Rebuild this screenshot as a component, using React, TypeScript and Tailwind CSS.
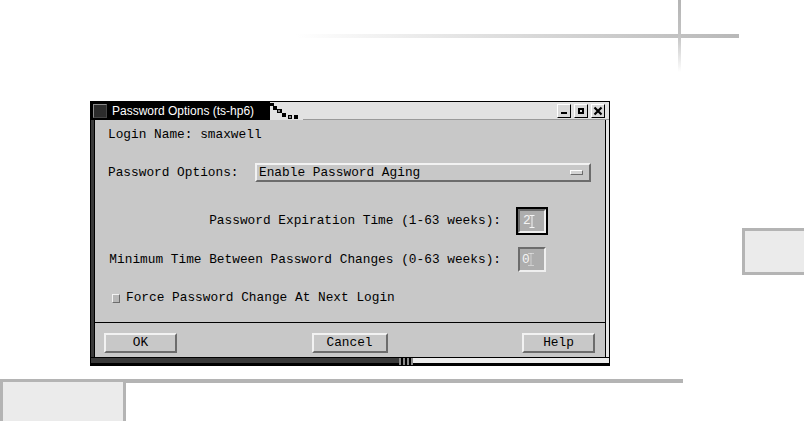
import { ReactNode } from "react";

const raised =
  "border-2 border-t-[#f2f2f2] border-l-[#f2f2f2] border-b-[#6c6c6c] border-r-[#6c6c6c]";
const sunken =
  "border-2 border-t-[#6c6c6c] border-l-[#6c6c6c] border-b-[#efefef] border-r-[#efefef]";

function Btn({ children }: { children: ReactNode }) {
  return (
    <div className={`${raised} bg-[#c8c8c8] h-[20px] flex items-center justify-center text-black leading-none`}>
      {children}
    </div>
  );
}

function WinBtn({ kind }: { kind: "min" | "max" | "close" }) {
  return (
    <div className="w-[14px] h-[14px] border border-t-white border-l-white border-b-black border-r-black bg-[#d9d9d9] flex items-center justify-center">
      <svg width="10" height="10" viewBox="0 0 10 10">
        {kind === "min" && <rect x="2" y="6" width="6" height="2" fill="#000" />}
        {kind === "max" && (
          <>
            <rect x="2" y="2" width="6" height="6" fill="#000" />
            <rect x="4" y="4" width="2" height="2" fill="#d9d9d9" />
          </>
        )}
        {kind === "close" && (
          <path d="M1.5 1.5 L8.5 8.5 M8.5 1.5 L1.5 8.5" stroke="#000" strokeWidth="2.2" />
        )}
      </svg>
    </div>
  );
}

function Cursor({ dotted }: { dotted?: boolean }) {
  return (
    <svg width="6" height="13" viewBox="0 0 6 13" className="-ml-[2px]">
      <path
        d="M0.5 0.5 H5.5 M3 0.5 V12.5 M0.5 12.5 H5.5"
        stroke="#f4f4f4"
        strokeWidth="1"
        strokeDasharray={dotted ? "1 1" : undefined}
        fill="none"
      />
    </svg>
  );
}

export default function App() {
  return (
    <div className="relative w-[804px] h-[421px] bg-white overflow-hidden font-['Liberation_Mono',monospace] text-[12.8px]">
      {/* page decorations */}
      <div className="absolute left-[296px] top-[34px] w-[443px] h-[4px] bg-linear-to-r from-white to-[#b8b8b8]" />
      <div className="absolute left-[678px] top-0 w-[3px] h-[72px] bg-linear-to-b from-[#b4b4b4] via-[#c4c4c4] to-white" />
      <div className="absolute left-[742px] top-[228px] w-[70px] h-[47px] bg-[#ebebeb] border-[3px] border-[#b4b4b4]" />
      <div className="absolute left-0 top-[379px] w-[683px] h-[4px] bg-[#b4b4b4]" />
      <div className="absolute left-0 top-[379px] w-[126px] h-[45px] bg-[#ebebeb] border-[3px] border-[#b4b4b4]" />

      <div className="pl-[90px] pt-[101px]">
        <div className="w-[520px] h-[265px] flex flex-col border border-black bg-[#c8c8c8]">
          {/* title bar */}
          <div className="h-[18px] flex items-stretch">
            <div className="w-[176px] bg-black flex items-center">
              <div className="ml-[2px] w-[14px] h-[14px] border border-t-[#8a8a8a] border-l-[#8a8a8a] border-b-[#444] border-r-[#444] bg-[#2c2c2c]" />
              <span className="ml-[5px] text-white font-['Liberation_Sans',sans-serif] text-[12px] leading-none whitespace-nowrap">
                Password Options (ts-hp6)
              </span>
            </div>
            <svg width="36" height="18" viewBox="0 0 36 18" className="shrink-0">
              <rect width="36" height="18" fill="#e2e2e2" />
              <rect x="0" y="0" width="3" height="18" fill="#000" />
              <rect x="3" y="1" width="4" height="3" fill="#000" />
              <rect x="6" y="4" width="4" height="4" fill="#000" />
              <rect x="10" y="7" width="5" height="4" fill="#000" />
              <rect x="15" y="11" width="4" height="4" fill="#000" />
              <rect x="21" y="13" width="4" height="4" fill="#000" />
              <rect x="27" y="13" width="4" height="4" fill="#000" />
              <rect x="11" y="8" width="2" height="2" fill="#888" />
              <rect x="22" y="14" width="2" height="2" fill="#888" />
            </svg>
            <div className="flex-1 bg-[#e2e2e2] border-b border-[#9a9a9a] flex items-center justify-end gap-[3px] pr-[4px]">
              <WinBtn kind="min" />
              <WinBtn kind="max" />
              <WinBtn kind="close" />
            </div>
          </div>

          {/* body */}
          <div className="flex-1 flex">
            <div className="w-[4px] bg-[#3a3a3a] border-r border-black" />
            <div className="flex-1 flex flex-col text-black">
              <div className="mt-[6px] h-[18px] pl-[13px] flex items-center whitespace-pre">Login Name: smaxwell</div>

              <div className="mt-[19px] h-[19px] flex items-center">
                <div className="pl-[13px] w-[160px] whitespace-pre">Password Options:</div>
                <div className={`${raised} w-[336px] h-[19px] bg-[#c8c8c8] flex items-center pl-[2px] pr-[6px]`}>
                  <span className="flex-1 whitespace-pre">Enable Password Aging</span>
                  <div className="w-[13px] h-[5px] border border-t-white border-l-white border-b-[#6c6c6c] border-r-[#6c6c6c] bg-[#d4d4d4]" />
                </div>
              </div>

              <div className="mt-[25px] h-[28px] flex items-center">
                <div className="w-[406px] text-right whitespace-pre">Password Expiration Time (1-63 weeks):</div>
                <div className="ml-[15px] w-[32px] h-[28px] border-2 border-black">
                  <div className={`${sunken} w-full h-full bg-[#adadad] flex items-center pl-[3px] text-[#f4f4f4]`}>
                    <span>2</span>
                    <Cursor />
                  </div>
                </div>
              </div>

              <div className="mt-[12px] h-[25px] flex items-center">
                <div className="w-[406px] text-right whitespace-pre">Minimum Time Between Password Changes (0-63 weeks):</div>
                <div className={`${sunken} ml-[17px] w-[28px] h-[25px] bg-[#adadad] flex items-center pl-[2px] text-[#f4f4f4]`}>
                  <span>0</span>
                  <Cursor dotted />
                </div>
              </div>

              <div className="mt-[19px] h-[14px] flex items-center pl-[17px] gap-[6px]">
                <div className="w-[8px] h-[9px] border border-t-[#f2f2f2] border-l-[#f2f2f2] border-b-[#6c6c6c] border-r-[#6c6c6c] bg-[#b8b8b8]" />
                <span className="whitespace-pre">Force Password Change At Next Login</span>
              </div>

              <div className="mt-[17px] h-px bg-black" />

              <div className="mt-[10px] flex justify-between pl-[9px] pr-[10px]">
                <div className="w-[73px]"><Btn>OK</Btn></div>
                <div className="w-[76px]"><Btn>Cancel</Btn></div>
                <div className="w-[73px]"><Btn>Help</Btn></div>
              </div>
            </div>
            <div className="w-[4px] bg-[#e6e6e6] border-l border-black" />
          </div>

          {/* bottom frame */}
          <div className="h-[8px] flex border-t border-black">
            <div className="w-[308px] bg-[#3a3a3a] border-b-2 border-black" />
            <div className="w-[14px] bg-[#8a8a8a] flex gap-[2px] px-[2px]">
              <div className="w-[3px] bg-black" />
              <div className="w-[3px] bg-black" />
              <div className="w-[3px] bg-black" />
            </div>
            <div className="flex-1 bg-[#ececec] border-b-2 border-black" />
          </div>
        </div>
      </div>
    </div>
  );
}
